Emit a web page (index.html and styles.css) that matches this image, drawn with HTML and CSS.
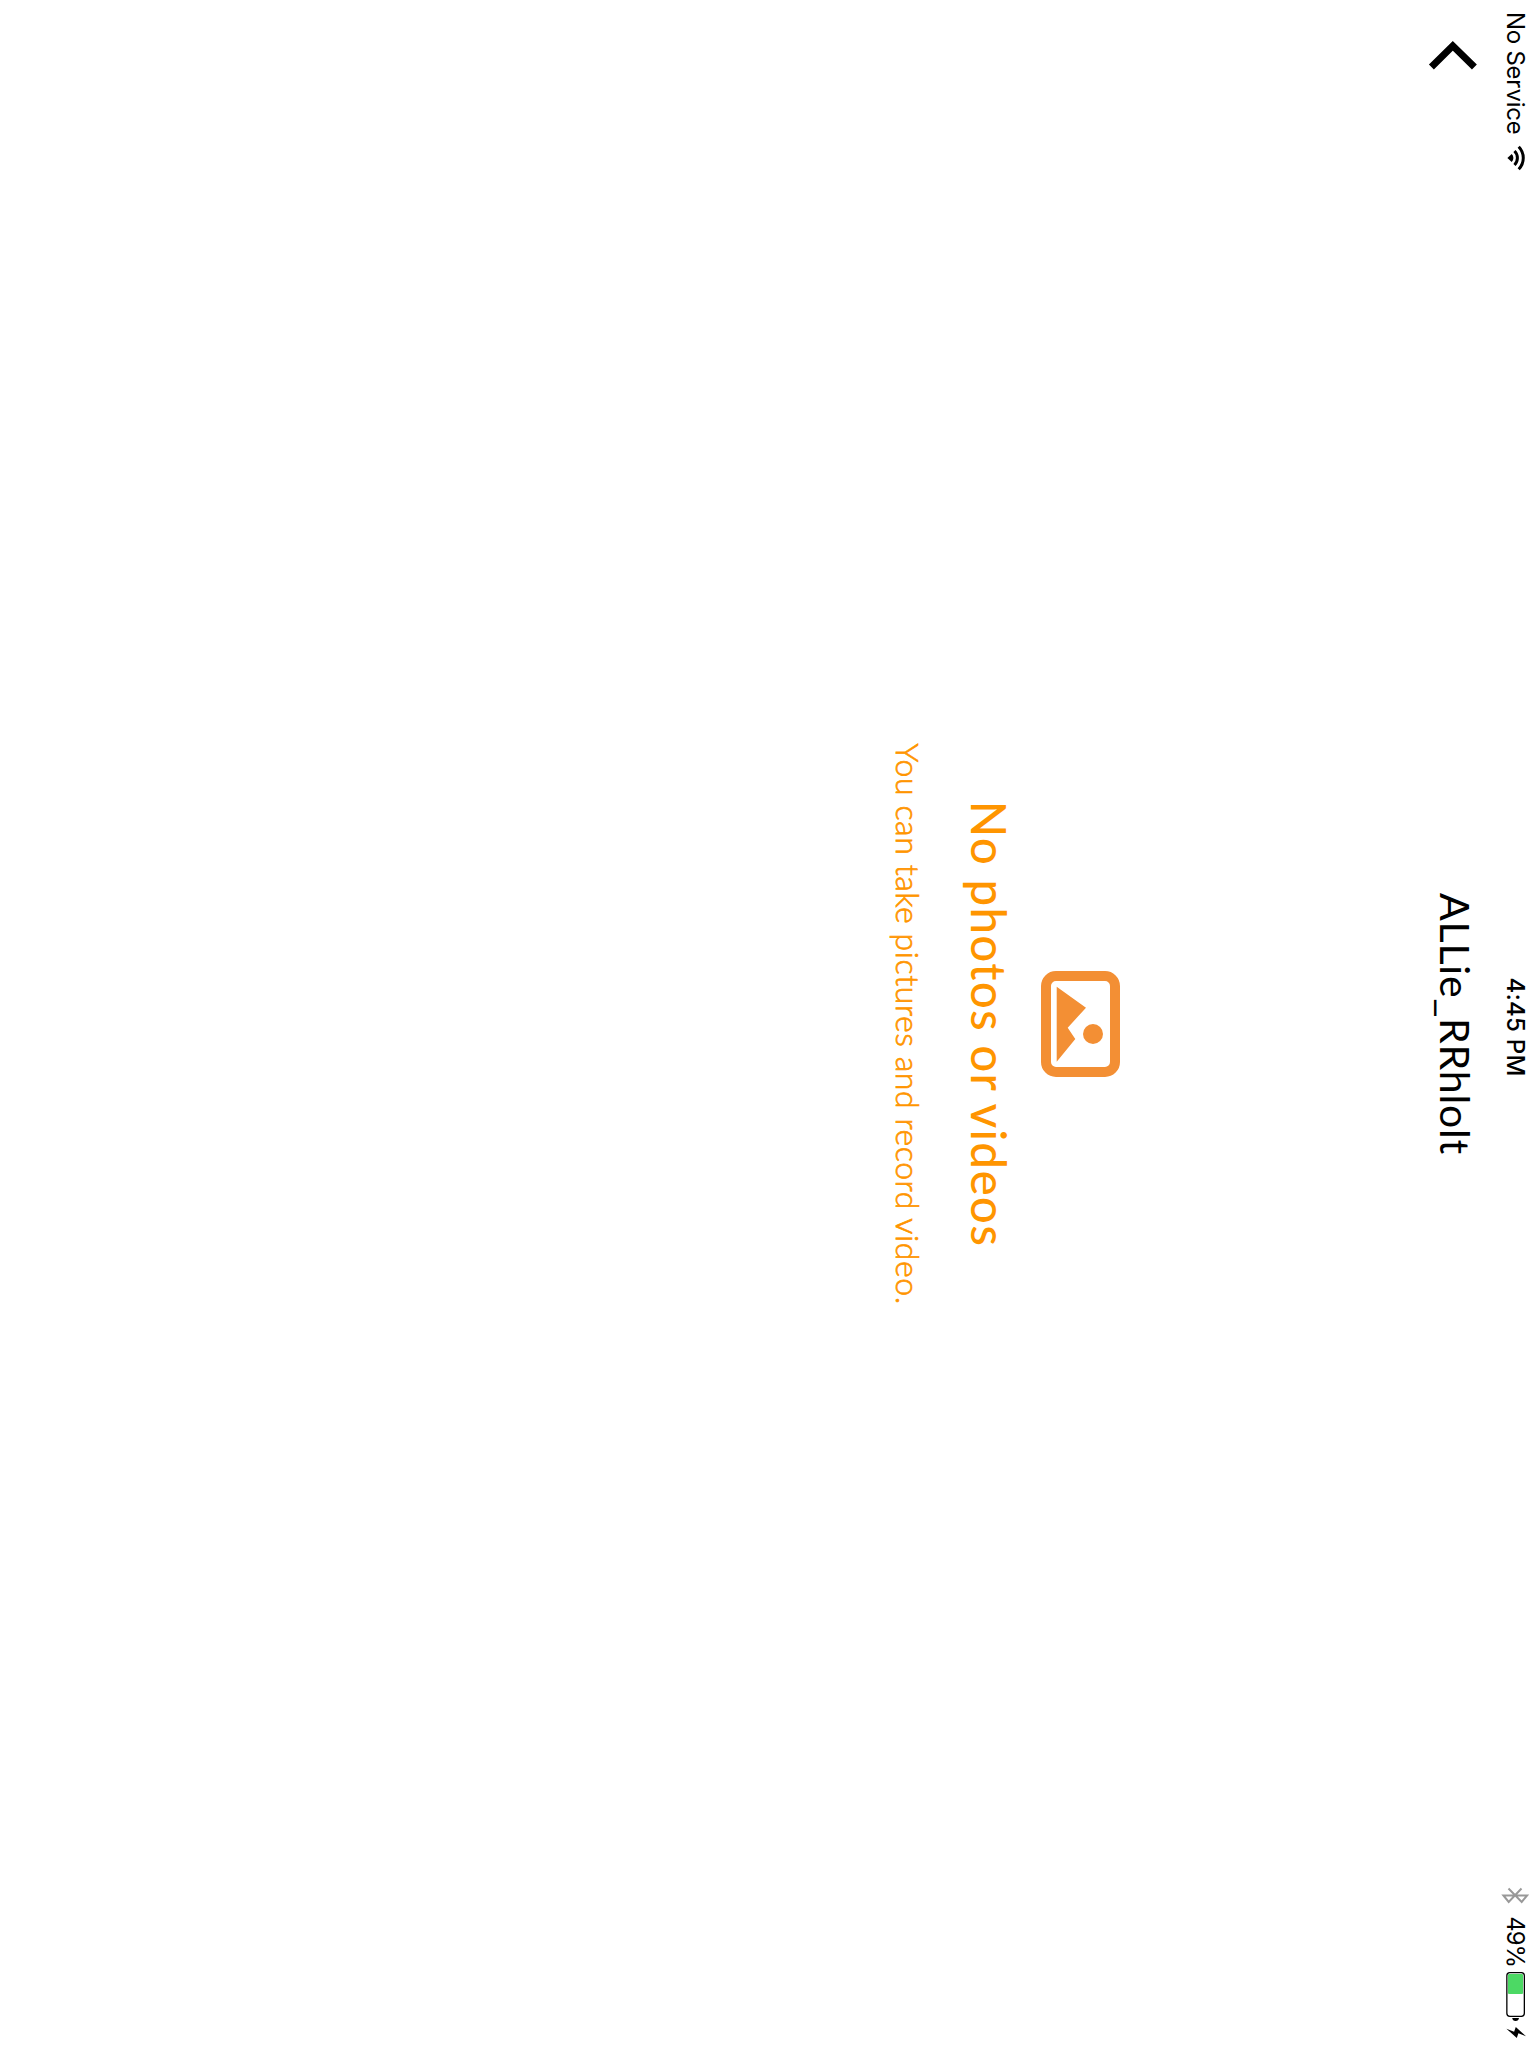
FILE: index.html
```html
<!DOCTYPE html>
<html lang="en">
<head>
<meta charset="utf-8">
<title>ALLie_RRhlolt</title>
<link rel="stylesheet" href="styles.css">
</head>
<body>
<div class="device">
<div class="screen">
  <div class="status-bar">
    <div class="status-left">
      <span class="carrier">No Service</span>
      <svg class="wifi" width="26" height="20" viewBox="0 0 26 20">
        <path d="M13 18.6 8.9 14.3A5.8 5.8 0 0 1 17.1 14.3Z"/>
        <path class="arc" d="M6 11.5A9.9 9.9 0 0 1 20 11.5"/>
        <path class="arc" d="M1.8 7.3A16 16 0 0 1 24.2 7.3"/>
      </svg>
    </div>
    <time class="clock">4:45 PM</time>
    <div class="status-right">
      <svg class="bluetooth" width="17" height="28" viewBox="0 0 17 28">
        <path d="M1.5 7.5 15 20.3 8.5 25.6V2L15 7.3 1.5 20.5"/>
      </svg>
      <span class="percent">49%</span>
      <svg class="battery" width="50" height="20" viewBox="0 0 50 20">
        <rect class="shell" x=".65" y=".65" width="43.7" height="17.5" rx="3"/>
        <rect class="charge" x="2" y="2" width="20" height="15" rx="1"/>
        <path d="M46 6Q49 6.4 49 9.4T46 12.8Z"/>
      </svg>
      <svg class="bolt" width="11" height="20" viewBox="0 0 11 20">
        <path d="M9.3 0 6.3 7.6 11 9.2 1.7 19.6 4.7 11.9 0 10.2Z"/>
      </svg>
    </div>
  </div>
  <header class="nav-bar">
    <svg class="back" width="34" height="50" viewBox="0 0 34 50">
      <path d="M28 3.6 6.8 25.2 28 46.6"/>
    </svg>
    <h1 class="title">ALLie_RRhlolt</h1>
  </header>
  <main class="empty">
    <svg class="picture" width="106" height="79" viewBox="0 0 106 79">
      <rect class="frame" x="5" y="5" width="96" height="69" rx="10"/>
      <path d="M15.7 63.3 36.7 34 56.7 52.3 68 44.7 90.7 63.3Z"/>
      <circle cx="63" cy="27" r="10"/>
    </svg>
    <h2 class="heading">No photos or videos</h2>
    <p class="hint">You can take pictures and record video.</p>
  </main>
</div>
</div>
</body>
</html>
```
FILE: styles.css
```css
body {
  margin: 0;
  background: #fff;
}

.device {
  width: 1536px;
  height: 2048px;
  overflow: hidden;
}

/* Landscape screen on a device held in portrait */
.screen {
  width: 2048px;
  height: 1536px;
  display: flex;
  flex-direction: column;
  transform-origin: 0 0;
  transform: translateX(1536px) rotate(90deg);
  color: #000;
}

svg {
  display: block;
  flex: none;
}

.status-bar {
  height: 40px;
  display: grid;
  grid-template-columns: 1fr auto 1fr;
  padding: 0 10px 0 12px;
  font: 400 24px/42px Inter, sans-serif;
}

.status-left,
.status-right {
  display: flex;
  align-items: flex-start;
}

.status-right {
  justify-content: flex-end;
}

.carrier {
  letter-spacing: -0.25px;
}

.wifi {
  margin: 10px 0 0 10px;
}

.arc {
  fill: none;
  stroke: #000;
  stroke-width: 3;
}

.clock {
  font-weight: 500;
  letter-spacing: 0.27px;
  padding-left: 4px;
}

.bluetooth {
  margin: 7px 12px 0 0;
  fill: none;
  stroke: #999;
  stroke-width: 2;
}

.percent {
  letter-spacing: -1.1px;
  margin-right: 5px;
}

.battery {
  margin: 11px 5px 0 0;
}

.shell {
  fill: none;
  stroke: #000;
  stroke-width: 1.3;
}

.charge {
  fill: #4cd964;
}

.bolt {
  margin-top: 10px;
}

.nav-bar {
  height: 88px;
  display: grid;
  grid-template-columns: 1fr auto 1fr;
  align-items: start;
}

.back {
  margin: 18px 0 0 39px;
  fill: none;
  stroke: #000;
  stroke-width: 7;
}

.title {
  margin: 17px 0 0;
  font: 400 41px/48px Lato, sans-serif;
  letter-spacing: 0.8px;
}

.empty {
  flex: 1;
  display: flex;
  flex-direction: column;
  align-items: center;
  padding-top: 288px;
  color: #ff9500;
}

.picture {
  fill: #f38f34;
}

.frame {
  fill: none;
  stroke: #f38f34;
  stroke-width: 10;
}

.heading {
  margin: 24px 0 0;
  font: 500 47.5px/56px Lato, sans-serif;
  letter-spacing: 1.32px;
}

.hint {
  margin: 34px 0 0;
  font: 300 32px/38px Lato, sans-serif;
  letter-spacing: 0.59px;
  -webkit-text-stroke: 0.7px #ff9500;
}
```
